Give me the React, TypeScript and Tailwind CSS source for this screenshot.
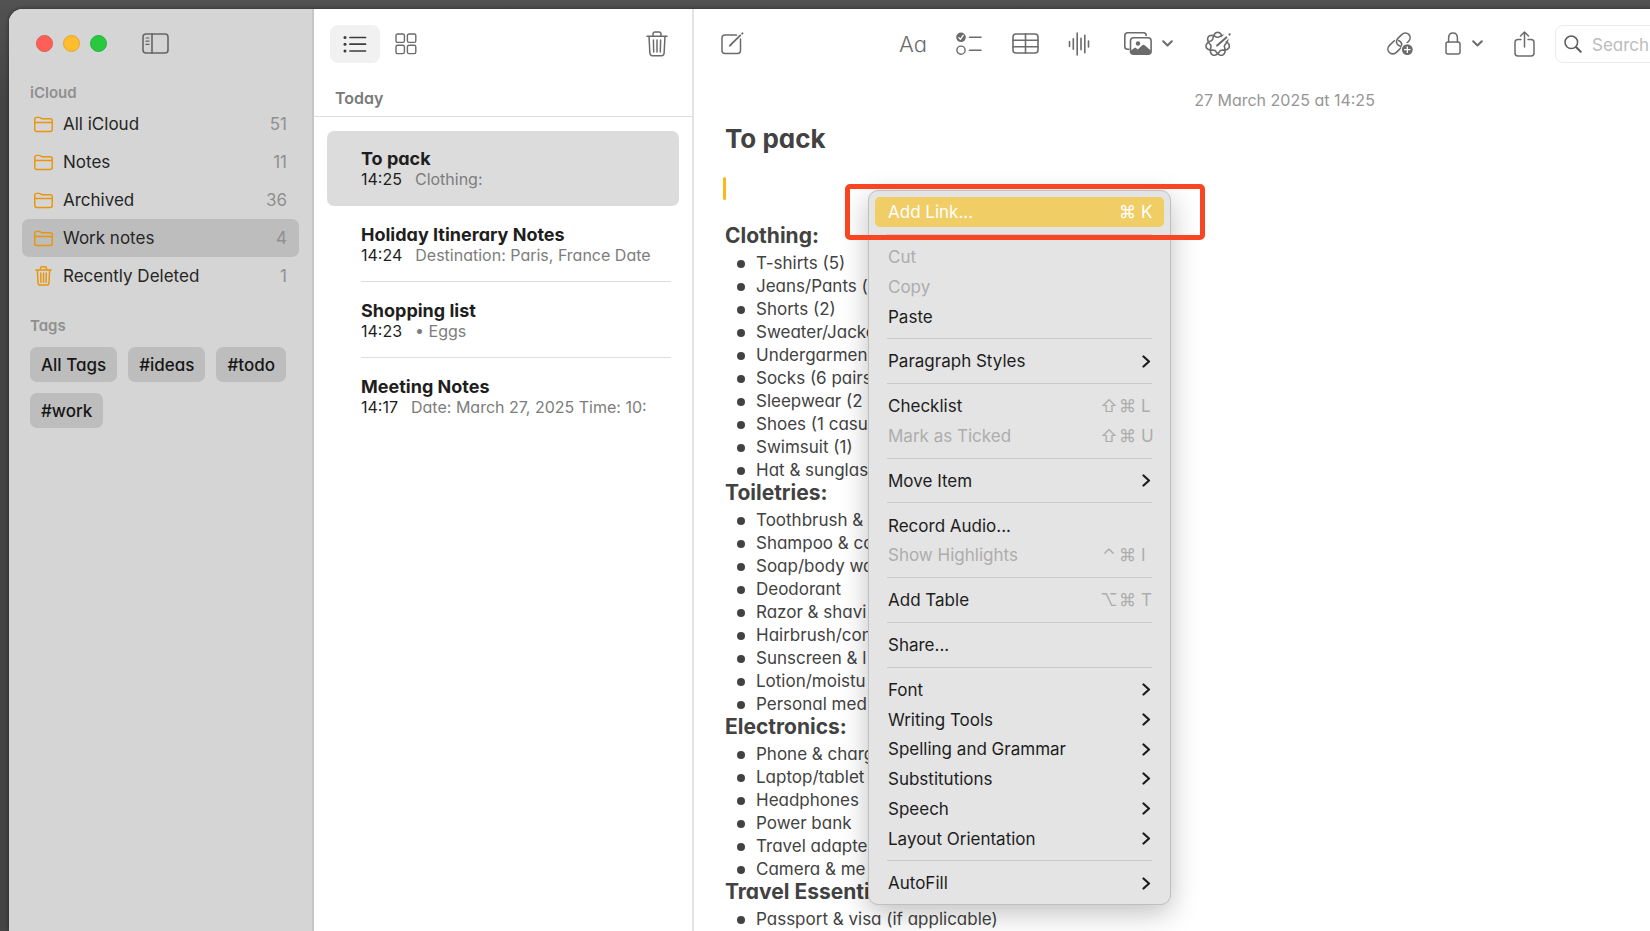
import { useState } from 'react';

const folders = [
    { name: 'All iCloud', count: 51, icon: 'folder' },
    { name: 'Notes', count: 11, icon: 'folder' },
    { name: 'Archived', count: 36, icon: 'folder' },
    { name: 'Work notes', count: 4, icon: 'folder' },
    { name: 'Recently Deleted', count: 1, icon: 'trash' },
];

const tags = ['All Tags', '#ideas', '#todo', '#work'];

const notes = [
    { title: 'To pack', time: '14:25', preview: 'Clothing:' },
    { title: 'Holiday Itinerary Notes', time: '14:24', preview: 'Destination: Paris, France Date' },
    { title: 'Shopping list', time: '14:23', preview: '• Eggs' },
    { title: 'Meeting Notes', time: '14:17', preview: 'Date: March 27, 2025 Time: 10:' },
];

const sections = [
    {
        heading: 'Clothing:',
        items: [
            'T-shirts (5)',
            'Jeans/Pants (',
            'Shorts (2)',
            'Sweater/Jacke',
            'Undergarmen',
            'Socks (6 pairs',
            'Sleepwear (2',
            'Shoes (1 casu',
            'Swimsuit (1)',
            'Hat & sunglas',
        ],
    },
    {
        heading: 'Toiletries:',
        items: [
            'Toothbrush &',
            'Shampoo & co',
            'Soap/body wa',
            'Deodorant',
            'Razor & shavi',
            'Hairbrush/con',
            'Sunscreen & l',
            'Lotion/moistu',
            'Personal med',
        ],
    },
    {
        heading: 'Electronics:',
        items: [
            'Phone & charg',
            'Laptop/tablet',
            'Headphones',
            'Power bank',
            'Travel adapte',
            'Camera & me',
        ],
    },
    { heading: 'Travel Essenti', items: ['Passport & visa (if applicable)'] },
];

interface MenuEntry {
    label: string;
    keys?: [string, string, string];
    submenu?: boolean;
    disabled?: boolean;
}

const menuGroups: MenuEntry[][] = [
    [{ label: 'Add Link...', keys: ['', '⌘', 'K'] }],
    [{ label: 'Cut', disabled: true }, { label: 'Copy', disabled: true }, { label: 'Paste' }],
    [{ label: 'Paragraph Styles', submenu: true }],
    [
        { label: 'Checklist', keys: ['⇧', '⌘', 'L'] },
        { label: 'Mark as Ticked', keys: ['⇧', '⌘', 'U'], disabled: true },
    ],
    [{ label: 'Move Item', submenu: true }],
    [{ label: 'Record Audio...' }, { label: 'Show Highlights', keys: ['⌃', '⌘', 'I'], disabled: true }],
    [{ label: 'Add Table', keys: ['⌥', '⌘', 'T'] }],
    [{ label: 'Share...' }],
    [
        { label: 'Font', submenu: true },
        { label: 'Writing Tools', submenu: true },
        { label: 'Spelling and Grammar', submenu: true },
        { label: 'Substitutions', submenu: true },
        { label: 'Speech', submenu: true },
        { label: 'Layout Orientation', submenu: true },
    ],
    [{ label: 'AutoFill', submenu: true }],
];

const stroke = {
    fill: 'none',
    stroke: 'currentColor',
    strokeLinecap: 'round' as const,
    strokeLinejoin: 'round' as const,
};

function FolderIcon() {
    return (
        <svg width="20" height="17" viewBox="0 0 20 17" {...stroke} strokeWidth="1.5">
            <path d="M.8 3.2C.8 1.8 1.6 1 2.9 1h2.6c.7 0 1.1.2 1.6.6l.5.4c.4.3.8.5 1.4.5h8.1c1.4 0 2.1.8 2.1 2.1v9.1c0 1.4-.7 2.1-2.1 2.1H2.9c-1.4 0-2.1-.7-2.1-2.1V3.2Z" />
            <path d="M.8 6.4h18.4" />
        </svg>
    );
}

function TrashIcon({ className, weight = 1.5 }: { className?: string; weight?: number }) {
    return (
        <svg className={className} viewBox="0 0 22 26" {...stroke} strokeWidth={weight}>
            <path d="M1 5.2h20M7 5V3.2C7 1.9 7.8 1 9.1 1h3.8C14.2 1 15 1.9 15 3.2V5" />
            <path d="m3 5.4.9 16.9c.1 1.5.9 2.4 2.4 2.4h9.4c1.5 0 2.3-.9 2.4-2.4L19 5.4" />
            <path d="m7.4 9 .3 12M11 9v12M14.6 9l-.3 12" />
        </svg>
    );
}

function SidebarIcon() {
    return (
        <svg width="27" height="21" viewBox="0 0 27 21" {...stroke} strokeWidth="1.6">
            <rect x="1" y="1" width="25" height="19" rx="3" />
            <path d="M10 1v19" />
            <path strokeWidth="1.2" d="M4 5h3M4 8.200h3M4 11.400h3" />
        </svg>
    );
}

function ListIcon() {
    return (
        <svg width="24" height="18" viewBox="0 0 24 18" {...stroke} strokeWidth="1.7">
            <path d="M7 2.500h15.500M7 9.200h15.500M7 16h15.500" />
            <g fill="currentColor" stroke="none">
                <circle cx="2" cy="2.5" r="1.5" />
                <circle cx="2" cy="9.2" r="1.5" />
                <circle cx="2" cy="16" r="1.5" />
            </g>
        </svg>
    );
}

function GridIcon() {
    return (
        <svg width="22" height="22" viewBox="0 0 22 22" {...stroke} strokeWidth="1.4">
            <rect x="1" y="1" width="8.4" height="8.4" rx="1.6" />
            <rect x="12.4" y="1" width="8.4" height="8.4" rx="1.6" />
            <rect x="1" y="12.2" width="8.4" height="8.4" rx="1.6" />
            <rect x="12.4" y="12.2" width="8.4" height="8.4" rx="1.6" />
        </svg>
    );
}

function ComposeIcon() {
    return (
        <svg width="23" height="23" viewBox="0 0 23 23" {...stroke} strokeWidth="1.5">
            <path d="M15.500 3H4C2.100 3 1 4.100 1 6v12.500c0 1.900 1.100 3 3 3h12.500c1.900 0 3-1.100 3-3V7" />
            <path strokeWidth="1.8" d="M9.300 13.200 19.300 3.400" />
            <path d="m8.400 14.300.8-2 1.200 1.200-2 .8Z" fill="currentColor" strokeWidth=".5" />
            <path strokeWidth="2" d="m21.300 1.500.1-.1" />
        </svg>
    );
}

function ChecklistIcon() {
    return (
        <svg width="26" height="24" viewBox="0 0 26 24" {...stroke} strokeWidth="1.6">
            <circle cx="5" cy="5.3" r="4.8" fill="currentColor" stroke="none" />
            <path stroke="#fff" strokeWidth="1.3" d="m2.900 5.600 1.500 1.700 2.800-4" />
            <circle cx="5" cy="18.2" r="4.1" strokeWidth="1.4" />
            <path d="M13.500 5.300H25M13.500 18.200H25" />
        </svg>
    );
}

function TableIcon() {
    return (
        <svg width="27" height="21" viewBox="0 0 27 21" {...stroke} strokeWidth="1.6">
            <rect x="1" y="1" width="25" height="19" rx="3" />
            <path d="M13.500 1v19M1 7.300h25M1 13.700h25" />
        </svg>
    );
}

function WaveIcon() {
    return (
        <svg width="22" height="24" viewBox="0 0 22 24" {...stroke} strokeWidth="1.6">
            <path d="M1.500 9.500v5M5.300 6.800v10.400M9.200 1v22M13 6.300v11.400M16.800 3.300v17.400M20.500 9v6" />
        </svg>
    );
}

function PhotosIcon() {
    return (
        <svg width="28" height="23" viewBox="0 0 28 23" {...stroke} strokeWidth="1.6">
            <path d="M5 17.300H3.800c-1.900 0-3-1-3-2.800V3.800c0-1.900 1.100-3 3-3h15.400c1.900 0 3 .9 3 2.600" />
            <rect x="6.5" y="5.8" width="20.6" height="16.4" rx="3" />
            <circle cx="14" cy="11.5" r="2.2" fill="currentColor" stroke="none" />
            <path
                fill="currentColor"
                stroke="none"
                d="M6.500 18.700 10.400 16c.6-.4 1.200-.4 1.700.1l1.600 1.300 4.500-4.200c.8-.7 1.700-.7 2.500 0l6.400 5.500v.8c0 1.700-1 2.700-2.700 2.700H9.200c-1.700 0-2.700-1-2.700-2.700v-.8Z"
            />
        </svg>
    );
}

function ChevronDown() {
    return (
        <svg width="11" height="7" viewBox="0 0 11 7" {...stroke} strokeWidth="2">
            <path d="m1.200 1.200 4.300 4.300 4.300-4.300" />
        </svg>
    );
}

function ChevronRight() {
    return (
        <svg width="9" height="13" viewBox="0 0 9 13" {...stroke} strokeWidth="2.2">
            <path d="m1.500 1.500 5.500 5-5.500 5" />
        </svg>
    );
}

// Seven interlaced lobes: one wave wound twice around the centre
const knot = Array.from({ length: 169 }, (_, i) => {
    const t = (i / 168) * Math.PI * 4;
    const r = 9.4 + 2.5 * Math.cos(3.5 * t);
    const x = 12.7 + r * Math.sin(t);
    const y = 13.2 - r * Math.cos(t);
    return `${x.toFixed(2)} ${y.toFixed(2)}`;
}).join('L');

function WritingToolsIcon() {
    return (
        <svg width="27" height="26" viewBox="0 0 27 26" {...stroke} strokeWidth="1.6">
            <path d={`M${knot}Z`} />
            <path stroke="#fff" strokeWidth="6" strokeLinecap="butt" d="m15 11.600 10-9.400" />
            <path strokeWidth="2" d="m12.100 14.600 9.200-8.200" />
            <path strokeWidth="2.2" d="m24.500 3.500.1-.1" />
        </svg>
    );
}

function LinkIcon() {
    return (
        <svg width="26" height="24" viewBox="0 0 26 24" {...stroke} strokeWidth="1.6">
            <path d="m7.300 8.700-4.800 4.700c-2 2-2.100 5.100-.2 7.100 1.900 1.900 5.100 1.800 7.100-.1l3.800-3.800c1.700-1.800 2-4.200.8-6.100-.6-.9-1.400-1.500-2.300-1.900" />
            <path d="M13.400 14.300c-1.300-.4-2.400-1.100-3.100-2.200-1.200-1.900-.9-4.300.8-6l3.600-3.500c2-2 5.200-2.100 7.100-.2 1.800 1.900 1.700 4.900-.2 6.900l-1.500 1.500" />
            <circle cx="20.3" cy="17.6" r="6.6" fill="#fff" stroke="none" />
            <circle cx="20.3" cy="17.6" r="5.4" fill="currentColor" stroke="none" />
            <path stroke="#fff" strokeWidth="1.3" d="M17.500 17.600h5.600M20.300 14.800v5.600" />
        </svg>
    );
}

function LockIcon() {
    return (
        <svg width="16" height="23" viewBox="0 0 16 23" {...stroke} strokeWidth="1.5">
            <rect x="1" y="10" width="14" height="12" rx="2" />
            <path d="M3.600 10V6c0-3 1.800-5 4.400-5s4.400 2 4.400 5v4" />
        </svg>
    );
}

function ShareIcon() {
    return (
        <svg width="21" height="26" viewBox="0 0 21 26" {...stroke} strokeWidth="1.5">
            <path d="M7 8.500H4c-1.900 0-3 1.100-3 3V22c0 1.900 1.100 3 3 3h13c1.900 0 3-1.100 3-3V11.500c0-1.900-1.100-3-3-3h-3M10.500 16V1.500M6.500 5l4-4 4 4" />
        </svg>
    );
}

function SearchIcon() {
    return (
        <svg className="shrink-0" width="18" height="18" viewBox="0 0 18 18" {...stroke} strokeWidth="1.5">
            <circle cx="7.3" cy="7.3" r="6.3" />
            <path strokeWidth="2" d="m12 12 4.700 4.700" />
        </svg>
    );
}

function Sidebar() {
    const [active, setActive] = useState('Work notes');

    return (
        <aside className="w-[305px] shrink-0 border-r-2 border-[#c6c6c6] bg-[#d5d5d5]">
            <div className="flex h-[69px] items-center gap-[10px] pl-[27px]">
                <button aria-label="Close" className="size-[17px] rounded-full border border-[#e2554e] bg-[#ff5f57]" />
                <button aria-label="Minimise" className="size-[17px] rounded-full border border-[#e3a72e] bg-[#febc2e]" />
                <button aria-label="Zoom" className="size-[17px] rounded-full border border-[#25b33b] bg-[#28c840]" />
                <button aria-label="Toggle sidebar" className="ml-[25px] text-[#656565]">
                    <SidebarIcon />
                </button>
            </div>

            <h2 className="pt-[5px] pl-[21px] text-[15px] leading-[20px] font-semibold text-[#8f8f8f]">iCloud</h2>
            <nav className="mt-[2px] px-[13px]">
                {folders.map((f) => (
                    <button
                        key={f.name}
                        onClick={() => setActive(f.name)}
                        className={`flex h-[38px] w-full items-center rounded-[7px] px-[12px] text-left text-[17px] ${active === f.name ? 'bg-[#bdbdbd]' : ''}`}
                    >
                        <span className="flex w-[19px] justify-center text-[#e8960c]">
                            {f.icon === 'folder' ? <FolderIcon /> : <TrashIcon className="h-[20px] w-[17px]" weight={1.9} />}
                        </span>
                        <span className="ml-[10px] flex-1 pt-[2px] text-[#262626]">{f.name}</span>
                        <span className="pt-[2px] text-[#909090]">{f.count}</span>
                    </button>
                ))}
            </nav>

            <h2 className="mt-[21px] pl-[21px] text-[15px] leading-[20px] font-semibold text-[#8f8f8f]">Tags</h2>
            <div className="mt-[11px] flex flex-wrap gap-[11px] pr-[12px] pl-[21px]">
                {tags.map((tag) => (
                    <button key={tag} className="h-[35px] rounded-[7px] bg-[#bdbdbd] px-[11px] pt-[2px] text-[17px] font-medium text-[#161616]">
                        {tag}
                    </button>
                ))}
            </div>
        </aside>
    );
}

function NoteList() {
    const [selected, setSelected] = useState(0);

    return (
        <section className="w-[380px] shrink-0 border-r-2 border-[#e3e3e3] bg-white">
            <div className="flex h-[69px] items-center pr-[24px] pl-[16px] text-[#6b6b6b]">
                <button aria-label="List view" className="flex h-[38px] w-[50px] items-center justify-center rounded-[8px] bg-[#f1f1f1] text-[#3c3c3c]">
                    <ListIcon />
                </button>
                <button aria-label="Gallery view" className="ml-[15px]">
                    <GridIcon />
                </button>
                <button aria-label="Delete" className="ml-auto">
                    <TrashIcon className="h-[26px] w-[22px]" />
                </button>
            </div>
            <h2 className="h-[39px] border-b border-[#dedede] pt-[10px] pl-[21px] text-[16px] leading-[20px] font-semibold text-[#7a7a7a]">
                Today
            </h2>

            <ul className="px-[13px] pt-[14px]">
                {notes.map((note, i) => (
                    <li key={note.title} className="h-[76px]">
                        <button
                            onClick={() => setSelected(i)}
                            className={`flex h-[75px] w-full rounded-[7px] pr-[8px] pl-[34px] text-left ${selected === i ? 'bg-[#dcdcdc]' : ''}`}
                        >
                            <span
                                className={`flex h-full w-full min-w-0 flex-col justify-center border-b pt-[1px] pr-[19px] ${
                                    selected === i || i === notes.length - 1 ? 'border-transparent' : 'border-[#dedede]'
                                }`}
                            >
                                <span className="text-[18px] leading-[21px] font-bold text-[#1e1e1e]">{note.title}</span>
                                <span className="flex gap-[13px] text-[16px] leading-[21px] whitespace-nowrap text-[#7d7d7d]">
                                    <span className="text-[#1e1e1e]">{note.time}</span>
                                    <span>{note.preview}</span>
                                </span>
                            </span>
                        </button>
                    </li>
                ))}
            </ul>
        </section>
    );
}

function Toolbar() {
    return (
        <div className="flex h-[69px] items-center pr-[19px] pl-[27px] text-[#6b6b6b]">
            <button aria-label="New note" className="mr-[154px]">
                <ComposeIcon />
            </button>
            <button aria-label="Format" className="w-[30px] text-[22px] leading-[26px] font-light">Aa</button>
            <button aria-label="Checklist" className="ml-[28px]">
                <ChecklistIcon />
            </button>
            <button aria-label="Table" className="ml-[30px]">
                <TableIcon />
            </button>
            <button aria-label="Record audio" className="ml-[29px]">
                <WaveIcon />
            </button>
            <button aria-label="Media" className="ml-[34px] flex items-center gap-[10px]">
                <PhotosIcon />
                <ChevronDown />
            </button>
            <button aria-label="Writing tools" className="ml-[32px]">
                <WritingToolsIcon />
            </button>
            <div className="ml-auto flex items-center">
                <button aria-label="Link note">
                    <LinkIcon />
                </button>
                <button aria-label="Lock" className="ml-[32px] flex items-center gap-[11px]">
                    <LockIcon />
                    <ChevronDown />
                </button>
                <button aria-label="Share" className="ml-[31px]">
                    <ShareIcon />
                </button>
                <label className="ml-[20px] flex h-[38px] w-[301px] items-center gap-[10px] rounded-[8px] border border-[#ebebeb] pl-[8px] text-[#5c5c5c]">
                    <SearchIcon />
                    <input
                        type="search"
                        aria-label="Search"
                        placeholder="Search"
                        className="w-full bg-transparent pt-[4px] text-[17px] outline-none placeholder:text-[#bcbcbc]"
                    />
                </label>
            </div>
        </div>
    );
}

function ContextMenu() {
    return (
        <div className="absolute top-[181px] left-[174px] w-[303px]">
            <div
                role="menu"
                className="flex h-[715px] flex-col rounded-[10px] border border-[#bfbfbf] bg-[#e4e4e4] px-[6px] py-[6px] text-[17px] shadow-[0_8px_28px_rgba(0,0,0,0.25)] [font-feature-settings:normal]"
            >
                {menuGroups.map((group, g) => (
                    <div key={group[0].label} className="contents">
                        {g > 0 && <hr className="mx-[12px] my-[7px] border-[#c9c9c9]" />}
                        {group.map((item) => (
                            <button
                                key={item.label}
                                role="menuitem"
                                disabled={item.disabled}
                                className={`flex flex-1 items-center rounded-[5px] px-[13px] text-left ${
                                    g === 0 ? 'bg-[#f1cd66] text-white' : item.disabled ? 'text-[#adadad]' : 'text-[#1d1d1d]'
                                }`}
                            >
                                <span className="flex-1 pt-[2px]">{item.label}</span>
                                {item.keys && (
                                    <span className={`flex pt-[2px] ${g === 0 ? 'text-white' : 'text-[#adadad]'}`}>
                                        <span className="w-[18px] text-center">{item.keys[0]}</span>
                                        <span className="w-[19px] text-center">{item.keys[1]}</span>
                                        <span className="ml-[4px] w-[10px]">{item.keys[2]}</span>
                                    </span>
                                )}
                                {item.submenu && <ChevronRight />}
                            </button>
                        ))}
                    </div>
                ))}
            </div>
            {/* Callout around the first entry */}
            <div className="pointer-events-none absolute top-[-6px] left-[-23px] h-[56px] w-[360px] rounded-[5px] border-5 border-[#f94522]" />
        </div>
    );
}

function Editor() {
    return (
        <main className="relative flex-1 bg-white text-[#424242]">
            <Toolbar />
            <p className="pt-[12px] text-center text-[16px] leading-[20px] text-[#969696]">27 March 2025 at 14:25</p>
            <article className="pl-[31px]">
                <h1 className="mt-[12px] text-[26px] leading-[34px] font-bold">To pack</h1>
                <div className="mt-[21px] mb-[25px] -ml-[2px] h-[23px] w-[3px] rounded-full bg-[#fbb817]" />
                {sections.map((s) => (
                    <div key={s.heading}>
                        <h2 className="pb-[5px] text-[21px] leading-[22px] font-bold">{s.heading}</h2>
                        <ul>
                            {s.items.map((item) => (
                                <li key={item} className="flex items-center text-[17px] leading-[23px] whitespace-nowrap">
                                    <span className="mr-[11px] ml-[12px] size-[8px] rounded-full bg-[#424242]" />
                                    {item}
                                </li>
                            ))}
                        </ul>
                    </div>
                ))}
            </article>
            <ContextMenu />
        </main>
    );
}

export default function App() {
    return (
        <div className="h-screen overflow-hidden bg-linear-to-b from-[#525252] to-[#454545] to-10% pt-[9px] pl-[9px] font-['Inter',sans-serif]">
            {/* The window runs past the right and bottom edges of the screen */}
            <div className="-mr-[225px] flex min-h-full overflow-hidden rounded-t-[14px] bg-white shadow-[0_0_4px_rgba(0,0,0,0.5)] [font-feature-settings:'cv11']">
                <Sidebar />
                <NoteList />
                <Editor />
            </div>
        </div>
    );
}
